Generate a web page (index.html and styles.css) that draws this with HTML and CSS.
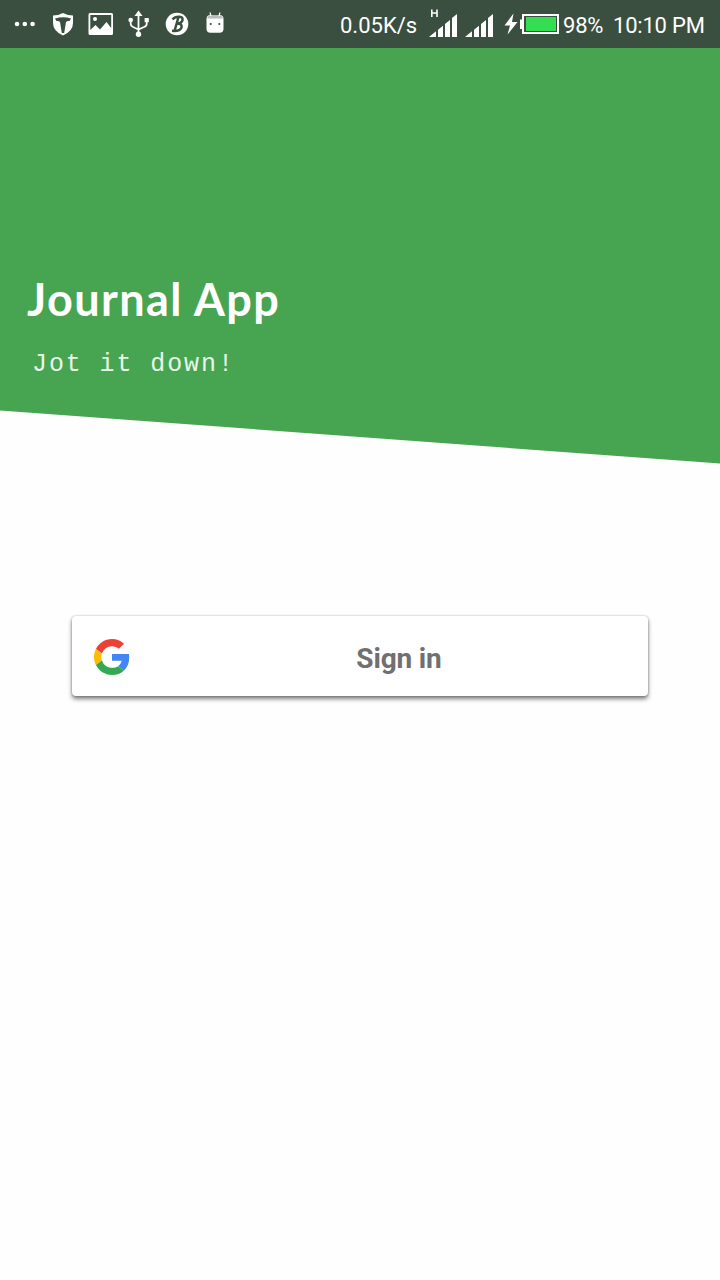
FILE: index.html
```html
<!DOCTYPE html>
<html lang="en">
<head>
<meta charset="utf-8">
<title>Journal App</title>
<link rel="stylesheet" href="styles.css">
</head>
<body>
<header class="status">
  <svg class="notices" width="240" height="48" viewBox="0 0 240 48" fill="#fff">
    <circle cx="17" cy="24" r="2.3"/><circle cx="24.8" cy="24" r="2.3"/><circle cx="32.6" cy="24" r="2.3"/>
    <path d="M63 13Q68 15.500 73 15.500V23Q73 31 63 35.500Q53 31 53 23V15.500Q58 15.500 63 13Z"/>
    <path fill="#3b4f40" d="M55 18.600Q63 16 71 18.600L69.500 21Q67.500 20.500 66 22L64.200 33H61.800L60 22Q58.500 20.500 56.500 21Z"/>
    <path fill-rule="evenodd" d="M90 13H111.500Q113 13 113 14.500V33.500Q113 35 111.500 35H90Q88.500 35 88.500 33.500V14.500Q88.500 13 90 13ZM90.300 15V30L95.500 25L100 29.500L106.500 22L111.200 28V15Z"/>
    <circle cx="95" cy="19" r="2"/>
    <g fill="none" stroke="#fff" stroke-width="1.800"><path d="M138.500 14V34M130.700 20V24Q130.700 26 133 27L138.500 29.500L144 27Q146.700 26 146.700 24V20"/></g>
    <path d="M138.500 10.500L142.500 16H134.500Z"/><circle cx="138.500" cy="34.300" r="2.700"/><circle cx="130.700" cy="20" r="2.300"/><path d="M144.600 18H148.800V22.200H144.600Z"/>
    <circle cx="177" cy="24" r="11.300"/>
    <path fill="none" stroke="#3b4f40" stroke-width="2.500" d="M172.500 19.500Q175 16.500 179.500 16.800Q183 17 182.500 20Q182 23 177.500 23.500Q182.500 24 181.500 27.500Q180 31.500 172 30.800M178.500 17L174.500 31"/>
    <path d="M206.500 19Q206.500 15 210.500 15H219.500Q223.500 15 223.500 19V29Q223.500 32.700 219.500 32.700H210.500Q206.500 32.700 206.500 29Z"/>
    <path fill="#b7beb9" d="M207 18.500Q208 15 211 15H219Q222 15 223 18.500Z"/>
    <path stroke="#fff" stroke-width="1.200" d="M210 12.500L211 16M220 12.500L219 16"/>
    <circle fill="#3b4f40" cx="210.700" cy="24" r="1.100"/><circle fill="#3b4f40" cx="219.300" cy="24" r="1.100"/>
  </svg>
  <span class="rate">0.05K/s</span>
  <svg class="signals" width="66" height="48" viewBox="428 0 66 48" fill="#fff">
    <path fill="none" stroke="#fff" stroke-width="1.600" d="M431.800 9.500V17M437 9.500V17M431.600 13H437"/>
    <path id="bars" d="M429 37L436 31.300V37ZM438 29.700L443 25.700V37H438ZM445 24L450 20V37H445ZM452 18L457 14V37H452Z"/>
    <use href="#bars" x="36"/>
  </svg>
  <svg class="battery" width="57" height="48" viewBox="503 0 57 48">
    <path fill="#fff" d="M513.500 13.500L504.500 25.500H510L507.500 34.500L517.500 22H512Z"/>
    <path fill="#fff" d="M520 19.500H523V29H520Z"/>
    <path fill="none" stroke="#fff" stroke-width="2" d="M523 15H558V33H523Z"/>
    <path fill="#35dd52" d="M526 17H556V31H526Z"/>
  </svg>
  <span class="percent">98%</span>
  <time class="clock">10:10 PM</time>
</header>
<main>
  <section class="hero">
    <h1 class="title">Journal App</h1>
    <p class="tagline">Jot it down!</p>
  </section>
  <button class="signin">
    <svg width="36" height="36" viewBox="0 0 48 48">
      <path fill="#ea4335" d="M24 9.500c3.540 0 6.710 1.220 9.210 3.600l6.850-6.850C35.900 2.380 30.470 0 24 0 14.620 0 6.510 5.380 2.560 13.220l7.980 6.190C12.430 13.720 17.740 9.500 24 9.500z"/>
      <path fill="#4285f4" d="M46.980 24.550c0-1.570-.15-3.090-.38-4.550H24v9.020h12.940c-.58 2.960-2.260 5.480-4.780 7.180l7.730 6c4.510-4.180 7.090-10.360 7.090-17.650z"/>
      <path fill="#fbbc05" d="M10.530 28.590c-.48-1.450-.76-2.990-.76-4.590s.27-3.140.76-4.590l-7.980-6.190C.92 16.460 0 20.120 0 24c0 3.880.92 7.540 2.560 10.780l7.970-6.190z"/>
      <path fill="#34a853" d="M24 48c6.480 0 11.930-2.130 15.890-5.810l-7.730-6c-2.150 1.450-4.920 2.300-8.160 2.300-6.260 0-11.570-4.220-13.470-9.910l-7.980 6.190C6.510 42.620 14.620 48 24 48z"/>
    </svg>
    <span class="label">Sign in</span>
  </button>
</main>
</body>
</html>
```
FILE: styles.css
```css
* { box-sizing: border-box; }
body { margin: 0; min-height: 1280px; background: #fefefe; font-family: Roboto, sans-serif; }
svg { display: block; flex: none; }
.status { display: flex; height: 48px; background: #3b4f40; color: #fff; font-size: 22px; line-height: 52px; letter-spacing: -.2px; white-space: nowrap; }
.rate { width: 88px; margin-left: 100px; letter-spacing: 0; }
.battery { margin-left: 9px; }
.percent { width: 50px; padding-left: 3px; }
.clock { padding-left: 3px; }
.hero { height: 416px; padding: 223px 0 0 27px; background: #47a451; color: #fff; clip-path: polygon(0 0, 100% 0, 100% 415.500px, 0 362.500px); }
.title { margin: 0; font: 700 45px/56px Lato, sans-serif; letter-spacing: 1.400px; }
.tagline { margin: 22px 0 0 5px; font: 25px/32px "Liberation Mono", monospace; letter-spacing: 1.900px; color: #e9f5ea; }
.signin { display: flex; align-items: center; width: 576px; height: 80px; margin: 152px auto 0; padding: 2px 22px 0; border: 0; border-radius: 4px; background: #fff; box-shadow: 0 3px 4px rgba(0,0,0,.5), 0 0 2px rgba(0,0,0,.3); }
.label { flex: 1; padding: 4px 0 0 42px; color: #707070; font: 700 28px/34px Roboto, sans-serif; letter-spacing: -.15px; text-align: center; }
```
